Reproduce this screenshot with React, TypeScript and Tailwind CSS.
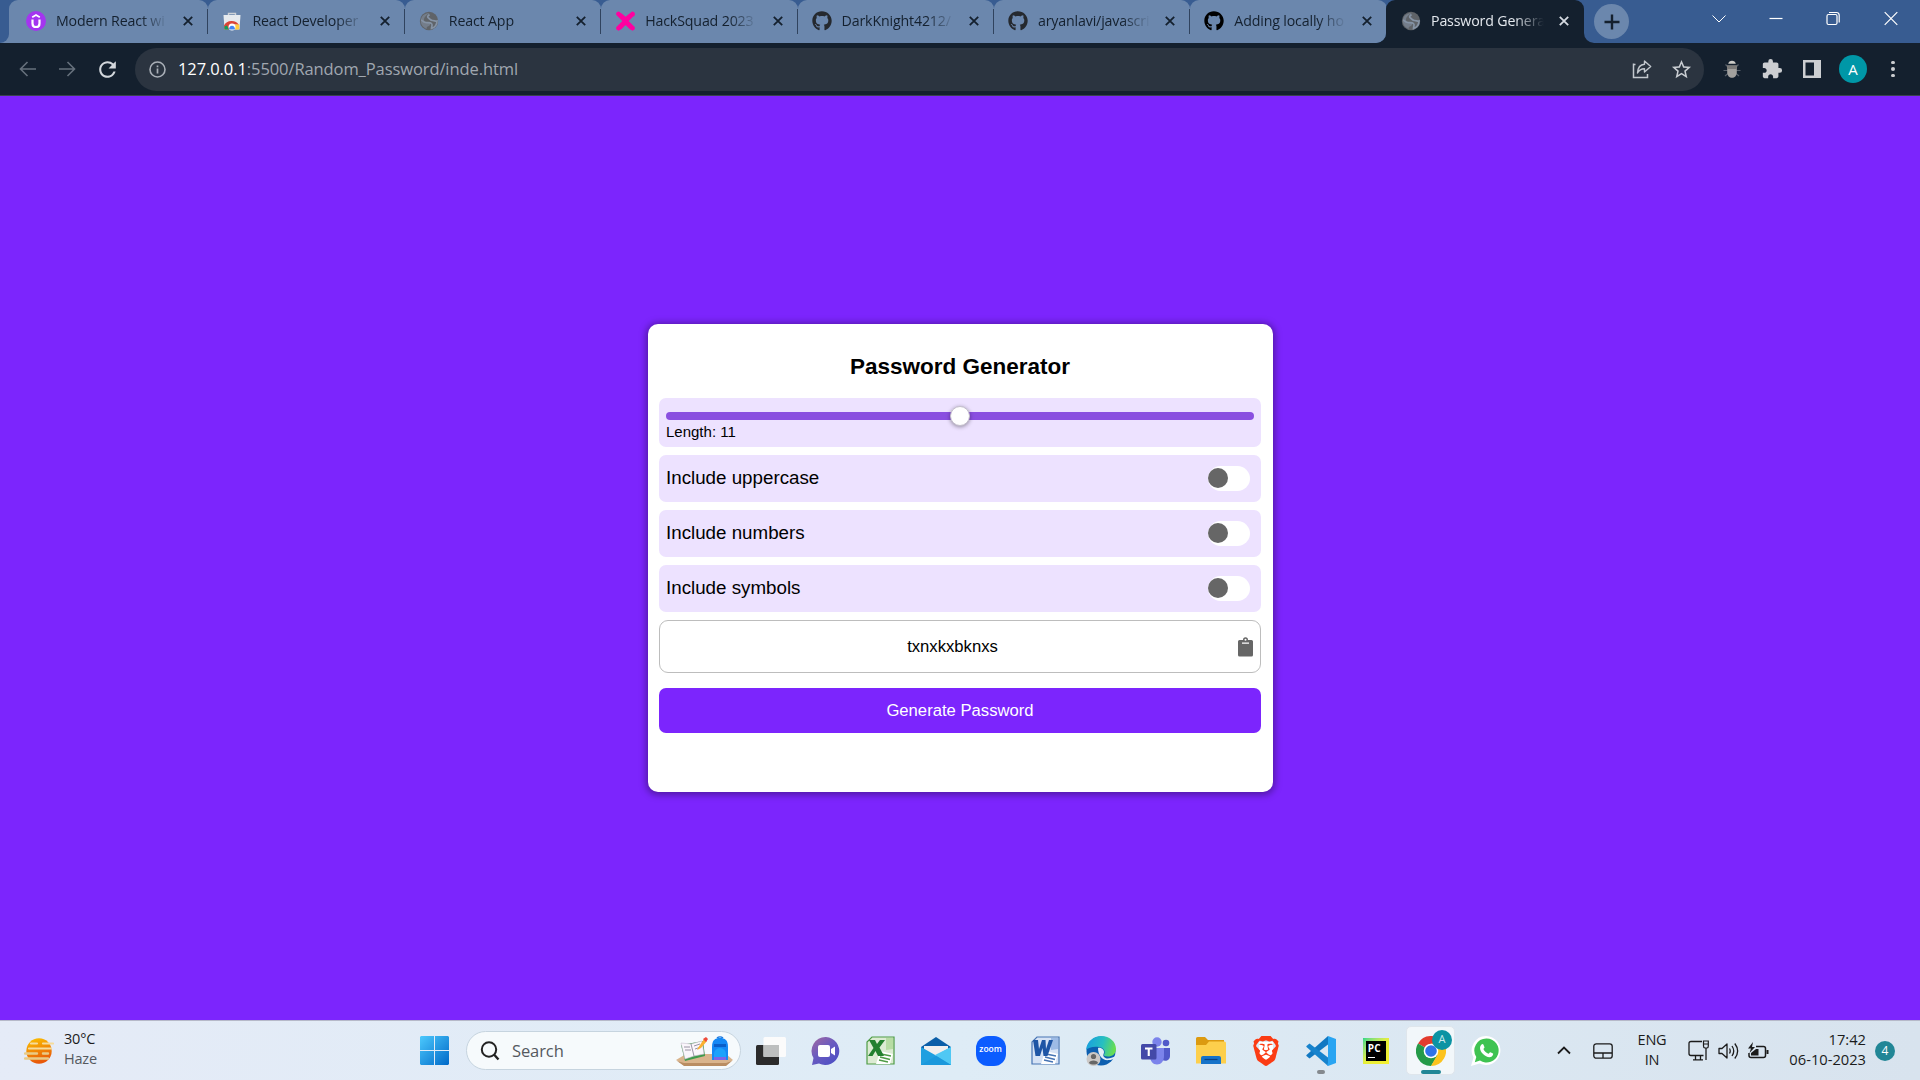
import React from "react";
import { FaGithub } from "react-icons/fa";
import { MdExtension, MdStarBorder, MdRefresh } from "react-icons/md";
import { SiBrave } from "react-icons/si";

const Globe = () => (
  <svg width="20" height="20" viewBox="0 0 20 20">
    <circle cx="10" cy="10" r="9.2" fill="#5f6368" />
    <path d="M10.500 2C8 3.500 5.500 5.500 5 8S7 11 9.500 11 12 13 10.500 14.500 7 15.500 8 17.800C4.500 17 1.800 14 1.800 10 1.800 5.500 5.500 1.800 10.500 2Z" fill="#8593a5" opacity=".55" />
    <path d="M10.500 3.500C8.500 5 8 6 9.500 7S11.500 9.500 13.500 9.500 16.500 10.500 18 10C18 13.500 15.500 16.500 12.500 17.500 12.500 15.500 14 14 12.500 12.500S9 11.800 6.500 11.500 3.500 9.500 2.200 9" fill="none" stroke="#8593a5" strokeWidth="1.700" />
  </svg>
);

const Udemy = () => (
  <svg width="20" height="20" viewBox="0 0 20 20">
    <circle cx="10" cy="10" r="10" fill="#a435f0" />
    <path d="M6.500 8.500V12.400C6.500 14.800 8 16 10 16S13.500 14.800 13.500 12.400V8.500" fill="none" stroke="#fff" strokeWidth="2.200" />
    <path d="M6.200 6.200 10 4 13.800 6.200" fill="none" stroke="#fff" strokeWidth="1.800" />
  </svg>
);

const WebStore = () => (
  <svg width="20" height="20" viewBox="0 0 20 20">
    <path d="M6.500 5V2.500H13.500V5" fill="none" stroke="#cfd3d8" strokeWidth="1.400" />
    <path d="M1.500 4H18.500L17.500 18.500H2.500Z" fill="#e6eaee" />
    <path d="M2.500 18.500 2 14.500A8.500 8 0 0 1 17 14L10 13 7 18.500Z" fill="#db4437" />
    <path d="M2.500 18.500 2.400 15.500 5 14.500 7 18.500Z" fill="#0f9d58" />
    <path d="M13 13.500H17.300L17.200 18.500H12Z" fill="#ffcd40" />
    <circle cx="10" cy="16" r="3.500" fill="#fff" />
    <path d="M7.200 18.500A2.900 2.900 0 1 1 12.800 18.500Z" fill="#4285f4" />
  </svg>
);

const HackSquad = () => (
  <svg width="21" height="20" viewBox="0 0 21 20">
    <path d="M4 3.500C6 4 8.500 8 10.500 8S15 4 17.500 3.500M4 17C6 16.500 8 12 10.500 12S15.500 16.500 17.500 17M3.500 3 17.500 17.200M17.500 3 3.500 17.200" stroke="#ff00a0" strokeWidth="4.600" strokeLinecap="round" fill="none" />
  </svg>
);

const CloseX = ({ light = false }: { light?: boolean }) => (
  <svg width="10" height="10" viewBox="0 0 10 10" className="shrink-0">
    <path d="M.8.800 9.200 9.200M9.200.800.800 9.200" stroke={light ? "#d5dae1" : "#14202e"} strokeWidth="1.800" />
  </svg>
);

const tabs = [
  { title: "Modern React wi", icon: <Udemy /> },
  { title: "React Developer", icon: <WebStore /> },
  { title: "React App", icon: <Globe /> },
  { title: "HackSquad 2023", icon: <HackSquad /> },
  { title: "DarkKnight4212/", icon: <FaGithub size={20} color="#25292f" /> },
  { title: "aryanlavi/javascri", icon: <FaGithub size={20} color="#25292f" /> },
  { title: "Adding locally ho", icon: <FaGithub size={20} color="#000" /> },
];

function Tab({ title, icon, last }: { title: string; icon: React.ReactNode; last?: boolean }) {
  return (
    <div className="relative flex h-[43px] w-[196.400px] items-center rounded-t-[9px] bg-[#6b87ad] pr-[15px] pb-px pl-[14px]">
      <div className="flex w-[21px] shrink-0">{icon}</div>
      <div className="ml-[9px] w-[120px] overflow-hidden text-[14.200px] tracking-[-0.150px] whitespace-nowrap text-[#14202e] [mask-image:linear-gradient(to_right,#000_70%,transparent_94%)]">
        {title}
      </div>
      <div className="ml-auto flex">
        <CloseX />
      </div>
      {!last && <div className="absolute top-[9px] right-0 h-[25px] w-px bg-[#30435e]" />}
    </div>
  );
}

function TabStrip() {
  return (
    <div className="flex h-[43px] bg-[#14202e]">
      <div className="flex w-[1386px] shrink-0 overflow-hidden rounded-br-[10px] bg-[#385c91]">
        <div className="w-[12px] shrink-0 bg-[#385c91] pt-[20px]">
          <div className="h-[23px] bg-[#6b87ad]">
            <div className="h-full w-[9px] rounded-br-[9px] bg-[#385c91]" />
          </div>
        </div>
        <div className="-ml-[3px] flex shrink-0">
          <div className="-mr-[9px] w-[12px] rounded-tl-[9px] bg-[#6b87ad]" />
          {tabs.map((t, i) => (
            <Tab key={t.title} title={t.title} icon={t.icon} last={i === tabs.length - 1} />
          ))}
        </div>
      </div>
      <div className="h-[20px] w-[198px] shrink-0 bg-[#385c91]">
        <div className="flex h-[43px] items-center rounded-t-[9px] bg-[#14202e] pr-[15px] pb-px pl-[15px]">
          <div className="flex w-[21px] shrink-0"><Globe /></div>
          <div className="ml-[9px] w-[120px] overflow-hidden text-[14.200px] tracking-[-0.150px] whitespace-nowrap text-[#e4e8ee] [mask-image:linear-gradient(to_right,#000_70%,transparent_94%)]">
            Password Genera
          </div>
          <div className="ml-auto flex"><CloseX light /></div>
        </div>
      </div>
      <div className="flex grow items-center rounded-bl-[10px] bg-[#385c91] pl-[10px]">
        <div className="flex size-[35px] items-center justify-center rounded-full bg-[#6b87ad]">
          <svg width="16" height="16" viewBox="0 0 16 16"><path d="M8 .5V15.500M.5 8H15.500" stroke="#14202e" strokeWidth="2.400" /></svg>
        </div>
        <div className="ml-auto flex h-full items-start pt-[11px] pr-[22px]">
          <svg width="14" height="16" viewBox="0 0 14 16" className="mr-[43px]"><path d="M.5 4.500 7 11 13.500 4.500" fill="none" stroke="#fff" /></svg>
          <svg width="14" height="16" viewBox="0 0 14 16" className="mr-[43px]"><path d="M.5 7.500H13.500" stroke="#fff" strokeWidth="1.200" /></svg>
          <svg width="14" height="16" viewBox="0 0 14 16" className="mr-[44px]">
            <rect x="1" y="3.500" width="10" height="10" rx="1.500" fill="none" stroke="#fff" strokeWidth="1.200" />
            <path d="M3 1.500H10.500A2.700 2.700 0 0 1 13.200 4V11.500" fill="none" stroke="#fff" strokeWidth="1.200" />
          </svg>
          <svg width="14" height="16" viewBox="0 0 14 16"><path d="M.7 1.200 13.300 13.800M13.300 1.200.700 13.800" stroke="#fff" strokeWidth="1.200" /></svg>
        </div>
      </div>
    </div>
  );
}

function Toolbar() {
  return (
    <div className="flex h-[53px] items-center border-b border-[#3a4250] bg-[#14202e] pl-[19px]">
      <svg width="17" height="16" viewBox="0 0 17 16"><path d="M8.500 1 1.500 8 8.500 15M1.500 8H17" fill="none" stroke="#66707c" strokeWidth="1.600" /></svg>
      <svg width="17" height="16" viewBox="0 0 17 16" className="ml-[23px]"><path d="M8.500 1 15.500 8 8.500 15M15.500 8H0" fill="none" stroke="#66707c" strokeWidth="1.600" /></svg>
      <MdRefresh size={25} color="#d3d7dc" className="ml-[19px]" />
      <div className="ml-[15px] flex h-[43px] w-[1569px] items-center rounded-full bg-[#2b3440] pr-[11px] pl-[14px]">
        <svg width="17" height="17" viewBox="0 0 17 17"><circle cx="8.500" cy="8.500" r="7.500" fill="none" stroke="#a9afb7" strokeWidth="1.600" /><path d="M8.500 7.500V12.500M8.500 4.500V6.200" stroke="#a9afb7" strokeWidth="1.700" /></svg>
        <div className="mt-px ml-[12px] text-[16.500px] tracking-[-0.090px] whitespace-nowrap text-[#a0a7b0]">
          <span className="text-white">127.0.0.1</span>:5500/Random_Password/inde.html
        </div>
        <svg width="20" height="20" viewBox="0 0 20 20" className="ml-auto">
          <path d="M1.500 4.500V18.500H15.500V15M1.500 5.500H3.500" fill="none" stroke="#c3c8ce" strokeWidth="1.500" />
          <path d="M12.500 2 18.700 7.500 12.500 13V9.800C9 9.800 7 11 5.500 14 5.800 9 8.500 5.600 12.500 5.300Z" fill="none" stroke="#c3c8ce" strokeWidth="1.400" strokeLinejoin="round" />
        </svg>
        <MdStarBorder size={23} color="#c9cdd2" className="ml-[18px]" />
      </div>
      <svg width="18" height="20" viewBox="0 0 18 20" className="ml-[19px]">
        <path d="M2.500 5.500 5 8M15.500 5.500 13 8M.5 11.500H17.500M2 17 5 14.500M16 17 13 14.500" stroke="#59616b" strokeWidth="1.200" />
        <path d="M5.200 4.800A3.900 4 0 0 1 12.800 4.800Z" fill="#cdccc8" />
        <path d="M4.200 6.500H13.800V13C13.800 17 11.500 18.800 9 18.800S4.200 17 4.200 13Z" fill="#a3a19e" />
        <path d="M4.200 6.500H13.800V10H4.200Z" fill="#7b7a79" />
      </svg>
      <MdExtension size={22} color="#ccced1" className="ml-[20px]" />
      <svg width="18" height="18" viewBox="0 0 18 18" className="ml-[20px]"><path fillRule="evenodd" d="M0 0H18V18H0ZM2.500 2.500V15.500H11V2.500Z" fill="#ccced1" /></svg>
      <div className="ml-[18px] flex size-[28px] items-center justify-center rounded-full bg-[#0097a7] text-[15px] text-white">A</div>
      <div className="ml-[24px] flex flex-col gap-[3px]">
        <div className="size-[3.500px] rounded-full bg-[#ccced1]" />
        <div className="size-[3.500px] rounded-full bg-[#ccced1]" />
        <div className="size-[3.500px] rounded-full bg-[#ccced1]" />
      </div>
    </div>
  );
}

function OptionRow({ label }: { label: string }) {
  return (
    <div className="mt-[8px] flex h-[47px] items-center justify-between rounded-[7px] bg-[#ede2ff] pr-[11px] pl-[7px] text-[18.750px]">
      <span className="-mt-px">{label}</span>
      <div className="flex h-[25px] w-[42px] items-center rounded-full bg-white">
        <div className="-mt-px size-[20px] rounded-full bg-[#666]" />
      </div>
    </div>
  );
}

function Card() {
  return (
    <div className="h-[468px] w-[625px] rounded-[10px] bg-white pr-[12px] pl-[11px] font-['Liberation_Sans',sans-serif] text-black shadow-[0_1px_7px_2px_rgba(0,0,0,0.350)]">
      <h1 className="flex h-[74px] items-end justify-center pb-[16px] text-center text-[22.500px] leading-[30px] font-bold">Password Generator</h1>
      <div className="h-[49px] rounded-[7px] bg-[#ede2ff] px-[7px] pt-[14px]">
        <div className="flex h-[8px] items-center justify-center rounded-full bg-[#8a4fe0]">
          <div className="size-[20px] shrink-0 rounded-full border border-[#c4bfcc] bg-white shadow-[0_1px_4px_rgba(0,0,0,0.400)]" />
        </div>
        <div className="mt-[2px] text-[15px] leading-[20px]">Length: 11</div>
      </div>
      <OptionRow label="Include uppercase" />
      <OptionRow label="Include numbers" />
      <OptionRow label="Include symbols" />
      <div className="mt-[8px] flex h-[53px] items-center rounded-[9px] border border-[#bdbdbd] pr-[7px]">
        <div className="grow pl-[7px] text-center text-[16.670px]">txnxkxbknxs</div>
        <svg width="15" height="20" viewBox="0 0 15 20">
          <path fillRule="evenodd" d="M1.500 3H5A2.500 2.800 0 0 1 10 3H13.500A1.500 1.500 0 0 1 15 4.500V18A1.500 1.500 0 0 1 13.500 19.500H1.500A1.500 1.500 0 0 1 0 18V4.500A1.500 1.500 0 0 1 1.500 3ZM7.500 1.700A1 1 0 0 0 7.500 3.700 1 1 0 0 0 7.500 1.700ZM4 5.500V6.700H11V5.500Z" fill="#666" />
        </svg>
      </div>
      <div className="mt-[15px] flex h-[45px] items-center justify-center rounded-[7px] bg-[#7c25fd] text-[16.670px] text-white">Generate Password</div>
    </div>
  );
}

const Haze = () => (
  <svg width="30" height="28" viewBox="0 0 30 28">
    <defs><linearGradient id="sun" x1="0" y1="0" x2="0.300" y2="1"><stop offset="0" stopColor="#fcc400" /><stop offset="1" stopColor="#e8590a" /></linearGradient></defs>
    <circle cx="15" cy="14" r="12.700" fill="url(#sun)" />
    <path d="M7 6.500H13M19 6.500H29M5 11.500H27" stroke="#f6dc9a" strokeWidth="2.200" strokeLinecap="round" />
    <path d="M1 16.500H13M19 16.500H24M1 21.500H24" stroke="#e9cb86" strokeWidth="2.400" strokeLinecap="round" />
  </svg>
);

const WindowsLogo = () => (
  <svg width="29" height="29" viewBox="0 0 29 29">
    <defs><linearGradient id="win" x1="0" y1="0" x2="1" y2="1"><stop offset="0" stopColor="#4cc9fd" /><stop offset="1" stopColor="#0069c8" /></linearGradient></defs>
    <path d="M1 0H14V14H0V1ZM15 0H28L29 1V14H15ZM0 15H14V29H1L0 28ZM15 15H29V28L28 29H15Z" fill="url(#win)" />
  </svg>
);

const SearchArt = () => (
  <svg width="58" height="32" viewBox="0 0 58 32">
    <path d="M0 25 10 19H50L57 25 50 30H8Z" fill="#d9b48c" />
    <path d="M1 26 8 31H50L56 26 50 28H8Z" fill="#b98d62" />
    <path d="M5 10 27 6 29 21 9 26Z" fill="#3f9a4c" />
    <path d="M5 8 15 9 26 6 28 19 18 21 9 24Z" fill="#faf6fb" stroke="#c9c0d0" strokeWidth=".6" />
    <path d="M15 9 18 21M8 12 14 12M9 15 15 15M18 11 24 9M19 14 25 12" stroke="#8f889a" strokeWidth=".9" />
    <path d="M22 13 28 4 31 6 25 13 21 15Z" fill="#fbb12f" />
    <path d="M27 4 30 2 32 4 30 7Z" fill="#ee4b3b" />
    <path d="M41 3A4 3 0 0 1 47 3" fill="none" stroke="#1a77e0" strokeWidth="1.500" />
    <path d="M36 12C36 5 39 3 44 3S52 5 52 12V25H36Z" fill="#1488f5" />
    <path d="M38 9H50V12H38Z" fill="#0a5fc9" />
    <path d="M38 19A6 6 0 0 1 50 19V24H38Z" fill="#1ca2fb" />
    <path d="M38 22H50V25H38Z" fill="#7c65e6" />
  </svg>
);

const TaskView = () => (
  <svg width="30" height="28" viewBox="0 0 30 28">
    <rect x="0" y="8" width="23" height="20" rx="1.500" fill="#2b2b2b" />
    <rect x="7.500" y="0" width="22.500" height="20" rx="1.500" fill="#fbfbfb" />
    <path d="M7.500 8H23V20H7.500Z" fill="#bdbfbf" />
  </svg>
);

const Chat = () => (
  <svg width="30" height="30" viewBox="0 0 30 30">
    <defs><linearGradient id="chat" x1="0" y1="0" x2=".8" y2="1"><stop offset="0" stopColor="#a4699f" /><stop offset=".5" stopColor="#6a5bc0" /><stop offset="1" stopColor="#4c4fc4" /></linearGradient></defs>
    <path d="M15 1A14 14 0 1 1 8 27.500L1 29 2.500 22A14 14 0 0 1 15 1Z" fill="url(#chat)" />
    <rect x="7" y="9" width="12" height="12" rx="2" fill="#fff" />
    <path d="M20 13 24 10.500V19.500L20 17Z" fill="#fff" />
  </svg>
);

const Office = ({ kind }: { kind: "X" | "W" }) => {
  const c = kind === "X" ? "#4e9c45" : "#4674b4";
  const d = kind === "X" ? "#23802f" : "#1e55a5";
  return (
    <svg width="29" height="29" viewBox="0 0 29 29">
      <path d="M6 1H28V28H1V6Z" fill={kind === "X" ? "#dcebd3" : "#d5e2f5"} stroke={c} strokeWidth="1.200" />
      <path d="M20 2H27V13L20 14Z" fill={kind === "X" ? "#b7dca4" : "#9dbbe6"} />
      <path d="M14 15 27 18 24 28H10Z" fill="#fff" />
      <path d="M15 18 25 20M14 21 24 23.500M13 24 22 26" stroke={c} strokeWidth="1.300" />
      {kind === "X" ? (
        <path d="M3 4H9L11 8 14 4H19L13.500 11.500 18 20H12L9.500 15 6.500 20H2L7.500 12Z" fill={d} />
      ) : (
        <path d="M2 4H7L8 13 11 4H14.500L15 13 18 4H22L16.500 20H12.500L11.500 12 9 20H4.500Z" fill={d} />
      )}
    </svg>
  );
};

const Mail = () => (
  <svg width="30" height="28" viewBox="0 0 30 28">
    <path d="M0 10 15 0 30 10V14H0Z" fill="#0b5ea8" />
    <path d="M3 9H27V20H3Z" fill="#f0efef" />
    <path d="M0 10 15 18.500 30 10V28H0Z" fill="#1f9fe0" />
    <path d="M30 10V28L14 18Z" fill="#4fc8f4" />
    <path d="M0 28 15 19 30 28Z" fill="#1a98dc" />
  </svg>
);

const Edge = () => (
  <svg width="30" height="30" viewBox="0 0 30 30">
    <defs>
      <linearGradient id="edgeTop" x1="0" y1=".3" x2="1" y2=".5"><stop offset="0" stopColor="#199fe0" /><stop offset=".55" stopColor="#27bfc0" /><stop offset="1" stopColor="#6cdf4b" /></linearGradient>
    </defs>
    <circle cx="15" cy="15" r="14.500" fill="#0d5fb0" />
    <path d="M0 14C1 5 8 0 15 0 24 0 30 6 30 13 30 18 26 20.500 22 20.500 19 20.500 17.500 19.500 18 18.500 20 16 18 11.500 13 11 7 10 2 12 0 14Z" fill="url(#edgeTop)" />
    <path d="M12 12C14 11 18 13 18 16 18 18 16.500 19 18 21S24 23.500 30 19.500L29 22C27 23.500 25 24 23 24 17 25 12 20 12 12Z" fill="#e2edf6" />
    <circle cx="7.500" cy="23" r="7" fill="#cbc8c6" />
    <circle cx="7.500" cy="20.500" r="2.600" fill="#666" />
    <path d="M3 27C3 23.500 12 23.500 12 27 10 29 5 29 3 27Z" fill="#666" />
  </svg>
);

const Teams = () => (
  <svg width="30" height="28" viewBox="0 0 30 28">
    <circle cx="25" cy="6" r="3.300" fill="#5059c9" />
    <path d="M20 11H29V19C29 23 25 25 21 23Z" fill="#5059c9" />
    <circle cx="16" cy="5" r="4.700" fill="#7b83eb" />
    <path d="M9 11H23V19C23 24 20 27.500 16 27.500S9 24 9 19Z" fill="#7b83eb" />
    <rect x="0" y="7" width="15.500" height="15.500" rx="1.500" fill="#4349a8" />
    <path d="M4 10.500H11.500V12.500H8.800V19H6.700V12.500H4Z" fill="#fff" />
  </svg>
);

const Explorer = () => (
  <svg width="30" height="27" viewBox="0 0 30 27">
    <path d="M0 1.500Q0 0 1.500 0H9L12 3H28V9H0Z" fill="#dc9a10" />
    <path d="M0 8H10L13 4.500H28.500Q30 4.500 30 6V26.500H0Z" fill="#fdcf4c" />
    <path d="M5 27V21Q5 19 7 19H23Q25 19 25 21V27Z" fill="#1673c9" />
    <path d="M8.500 22.500H21.500" stroke="#0b4283" strokeWidth="1.200" />
  </svg>
);

const VSCode = () => (
  <svg width="30" height="30" viewBox="0 0 30 30">
    <path d="M22 8.500 3.500 22.500 0.500 20Q0 19.500.500 19L22 0Z" fill="#1178c2" />
    <path d="M22 21.500 3.500 7.500.500 10Q0 10.500.500 11L22 30Z" fill="#1783cd" />
    <path d="M22 0 30 3V27L22 30Q20.500 28 22 27Z" fill="#2aa5f2" />
  </svg>
);

const PyCharm = () => (
  <div className="flex size-[26px] items-center justify-center bg-linear-to-br from-[#21d789] via-[#e6ee3a] to-[#f5ef2f]">
    <div className="flex size-[20px] flex-col bg-black pt-[2px] pl-[2px] font-['Open_Sans',sans-serif] text-[10px] leading-[10px] font-bold text-white">
      PC
      <div className="mt-[4px] h-[1.500px] w-[7px] bg-white" />
    </div>
  </div>
);

const ChromeIcon = () => (
  <svg width="30" height="30" viewBox="0 0 30 30">
    <path d="M15 15 2 7.500A15 15 0 0 1 28 7.500Z" fill="#e33b2e" />
    <path d="M15 15 2 7.500A15 15 0 0 0 15 30L22 19Z" fill="#249a48" />
    <path d="M15 15 21.500 18.500 15 30A15 15 0 0 0 28 7.500H15Z" fill="#fcc31e" />
    <circle cx="15" cy="15" r="7.300" fill="#fff" />
    <circle cx="15" cy="15" r="5.800" fill="#2f72e8" />
  </svg>
);

const WhatsApp = () => (
  <svg width="30" height="30" viewBox="0 0 30 30">
    <path d="M15.500 0A14.500 14.500 0 1 1 8.500 27.500L0 30 2.500 21.500A14.500 14.500 0 0 1 15.500 0Z" fill="#fff" />
    <path d="M15.500 2.500A12 12 0 1 1 9 24.500L3.800 26.200 5.300 21A12 12 0 0 1 15.500 2.500Z" fill="#3fc351" />
    <path d="M10.500 8.500C11.500 7.500 12.200 8 12.500 8.800L13.500 11.200C13.600 11.800 12.500 12.600 12.400 13 13.500 15.500 15.500 17 17.500 17.700 18.300 17.300 18.700 16 19.500 16.200L22 17.500C22.500 18 21.800 21 18.500 21.300 14 21.200 9 16 9 12 9 10.500 9.700 9.300 10.500 8.500Z" fill="#fff" />
  </svg>
);

const apps: { name: string; icon: React.ReactNode }[] = [
  { name: "tasks", icon: <TaskView /> },
  { name: "chat", icon: <Chat /> },
  { name: "excel", icon: <Office kind="X" /> },
  { name: "mail", icon: <Mail /> },
  { name: "zoom", icon: <div className="flex size-[30px] items-center justify-center rounded-[12px] bg-[#0b5cff] pb-[2px] text-[8.500px] font-semibold text-white">zoom</div> },
  { name: "word", icon: <Office kind="W" /> },
  { name: "edge", icon: <Edge /> },
  { name: "teams", icon: <Teams /> },
  { name: "files", icon: <Explorer /> },
  {
    name: "brave",
    icon: (
      <div className="relative flex">
        <div className="absolute top-[6px] left-[8px] h-[18px] w-[14px] bg-white" />
        <SiBrave size={30} color="#fb3c14" className="relative" />
      </div>
    ),
  },
  { name: "code", icon: <VSCode /> },
  { name: "pycharm", icon: <PyCharm /> },
  { name: "chrome", icon: <ChromeIcon /> },
  { name: "whatsapp", icon: <WhatsApp /> },
];

function Taskbar() {
  return (
    <div className="flex h-[60px] items-center border-t border-[#b6b9c9] bg-linear-to-r from-[#e5ebf7] via-[#deecf6] to-[#d8e3ee] text-[14.500px] text-[#1b1b1b]">
      <div className="flex w-[420px] items-center pl-[24px]">
        <Haze />
        <div className="-mt-[3px] ml-[10px] leading-[20px] tracking-[-0.200px]">
          <div>30°C</div>
          <div className="text-[#55595f]">Haze</div>
        </div>
      </div>
      <WindowsLogo />
      <div className="ml-[17px] flex h-[39px] w-[275px] items-center rounded-full border border-[#c6d4df] bg-[#f6fafc] pr-[6px] pl-[13px]">
        <svg width="20" height="20" viewBox="0 0 20 20"><circle cx="9" cy="8.500" r="7.200" fill="none" stroke="#222" strokeWidth="2" /><path d="M14 13.500 18.500 18.500" stroke="#222" strokeWidth="2.400" /></svg>
        <span className="mt-px ml-[12px] text-[16.500px] tracking-[-0.100px] text-[#55595f]">Search</span>
        <div className="ml-auto flex"><SearchArt /></div>
      </div>
      <div className="ml-[2px] flex">
        {apps.map((a) => (
          <div key={a.name} className="relative flex h-[59px] w-[55.040px] items-center justify-center">
            {a.name === "chrome" && <div className="absolute top-[5px] left-[3px] size-[49px] rounded-[5px] border border-[#dfe6ec] bg-[#f2f7fa]" />}
            <div className="relative flex">
              {a.icon}
              {a.name === "chrome" && <div className="absolute -top-[6px] left-[16px] flex size-[20px] items-center justify-center rounded-full bg-[#0b93a3] text-[11px] text-[#c9eaee]">A</div>}
            </div>
            {a.name === "chrome" && <div className="absolute bottom-[6px] left-[18px] h-[4px] w-[20px] rounded-full bg-[#218696]" />}
            {a.name === "code" && <div className="absolute bottom-[6px] left-[24px] h-[4px] w-[8px] rounded-full bg-[#84898e]" />}
          </div>
        ))}
      </div>
      <div className="ml-auto flex items-center pr-[25px]">
        <svg width="14" height="9" viewBox="0 0 14 9"><path d="M1 7.500 7 1.500 13 7.500" fill="none" stroke="#1b1b1b" strokeWidth="1.800" /></svg>
        <svg width="20" height="16" viewBox="0 0 20 16" className="ml-[22px]"><rect x=".8" y=".8" width="18.400" height="14.400" rx="2.500" fill="none" stroke="#1b1b1b" strokeWidth="1.300" /><path d="M1 10H19M10 10V15" stroke="#1b1b1b" strokeWidth="1.300" /></svg>
        <div className="-mt-px ml-[24px] w-[30px] text-center leading-[20px] tracking-[-0.200px]">ENG<br />IN</div>
        <svg width="21" height="21" viewBox="0 0 21 21" className="ml-[21px]">
          <path d="M14 1.500H3Q1 1.500 1 3.500V13.500Q1 15.500 3 15.500H15.500M7.500 16V19.500M12.500 16V19.500M5 19.800H15M18 8V20" fill="none" stroke="#1b1b1b" strokeWidth="1.300" />
          <path d="M15.500 1V6Q15.500 8 17 8H19Q20.300 8 20.300 6V1ZM15.500 4H20.300" fill="none" stroke="#1b1b1b" strokeWidth="1.200" />
        </svg>
        <svg width="21" height="18" viewBox="0 0 21 18" className="ml-[9px]">
          <path d="M1 6.500H4L9 2V16L4 11.500H1Z" fill="none" stroke="#1b1b1b" strokeWidth="1.300" strokeLinejoin="round" />
          <path d="M11.500 6.500Q13 9 11.500 11.500M14 4Q17.500 9 14 14M16.800 1.500Q22.500 9 16.800 16.500" fill="none" stroke="#1b1b1b" strokeWidth="1.300" />
        </svg>
        <svg width="21" height="18" viewBox="0 0 21 18" className="ml-[9px]">
          <path d="M8 4.500H15.500Q17.500 4.500 17.500 6.500V13.500Q17.500 15.500 15.500 15.500H3Q1 15.500 1 13.500V11" fill="none" stroke="#1b1b1b" strokeWidth="1.500" />
          <path d="M3 13.500V11L8 7H10.500V13.500ZM5 0 0 6.500H3L1.500 11 7 5H4ZM18.500 8H20.500V12H18.500Z" fill="#1b1b1b" />
        </svg>
        <div className="-mt-[3px] ml-[17px] w-[80px] text-right text-[14.700px] leading-[20px] whitespace-nowrap">17:42<br />06-10-2023</div>
        <div className="ml-[9px] flex size-[20px] items-center justify-center rounded-full bg-[#218696] text-[12px] text-white">4</div>
      </div>
    </div>
  );
}

export default function App() {
  return (
    <div className="flex h-[1080px] w-[1920px] flex-col overflow-hidden bg-[#7c25fd] font-['Open_Sans',sans-serif]">
      <TabStrip />
      <Toolbar />
      <main className="flex grow justify-center pt-[228px] pl-[1px]">
        <Card />
      </main>
      <Taskbar />
    </div>
  );
}
